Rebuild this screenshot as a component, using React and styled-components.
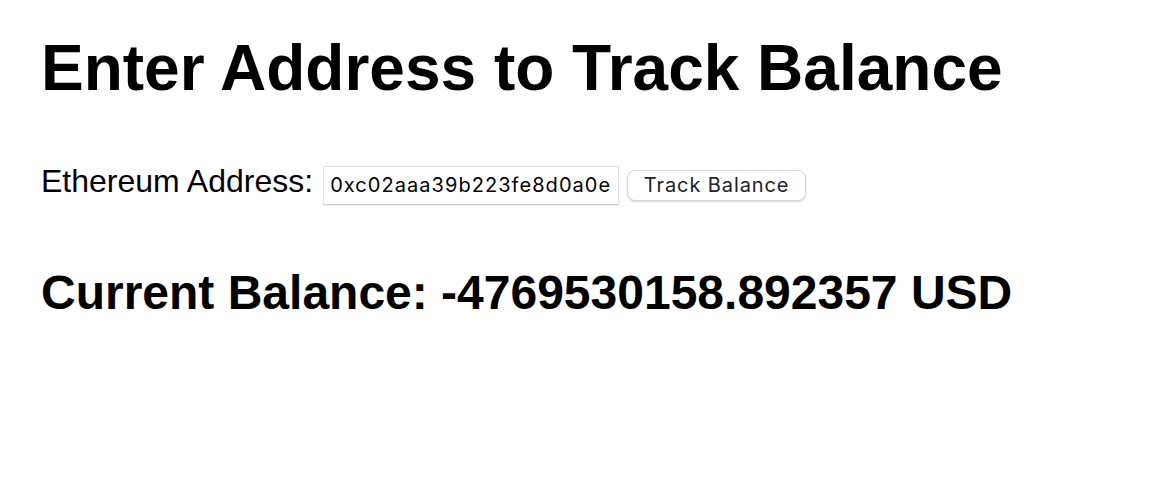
import React, { useState } from "react";
import styled, { createGlobalStyle } from "styled-components";

const GlobalStyle = createGlobalStyle`
  html, body { margin: 0; padding: 0; background: #ffffff; }
  body { font-family: "Liberation Sans", Arial, Helvetica, sans-serif; color: #000; }
`;

const Page = styled.div`
  padding: 31px 38px 0 41px;
  display: flex;
  flex-direction: column;
`;

const Title = styled.h1`
  margin: 0;
  font-size: 64px;
  font-weight: 700;
  line-height: 74px;
`;

const Form = styled.form`
  margin-top: 58px;
  display: flex;
  align-items: baseline;
`;

const Label = styled.label`
  font-size: 32px;
  line-height: 37px;
  margin-right: 10px;
`;

const AddressInput = styled.input`
  box-sizing: border-box;
  width: 296px;
  height: 39px;
  padding: 0 6px;
  margin-right: 8px;
  border: 1px solid #e2e2e2;
  border-bottom-color: #cfcfcf;
  border-radius: 0;
  box-shadow: 0 1px 1px rgba(0, 0, 0, 0.06);
  font-family: Inter, "Noto Sans", sans-serif;
  font-size: 20px;
  letter-spacing: 1.05px;
  color: #000;
  background: #fff;
  outline: none;
`;

const TrackButton = styled.button`
  box-sizing: border-box;
  width: 179px;
  height: 31px;
  padding: 0;
  border: 1px solid #d6d6d6;
  border-radius: 8px;
  background: #ffffff;
  box-shadow: 0 1px 2px rgba(0, 0, 0, 0.14);
  font-family: Inter, "Noto Sans", sans-serif;
  font-size: 20px;
  letter-spacing: 0.9px;
  color: #222;
  cursor: pointer;
`;

const Balance = styled.h2`
  margin: 60px 0 0 0;
  font-size: 48px;
  font-weight: 700;
  line-height: 55px;
`;

export default function App() {
  const [address, setAddress] = useState("0xc02aaa39b223fe8d0a0e5c4f27ead9083c756cc2");
  return (
    <>
      <GlobalStyle />
      <Page>
        <Title>Enter Address to Track Balance</Title>
        <Form onSubmit={(e) => e.preventDefault()}>
          <Label htmlFor="addr">Ethereum Address:</Label>
          <AddressInput
            id="addr"
            value={address}
            onChange={(e) => setAddress(e.target.value)}
          />
          <TrackButton type="submit">Track Balance</TrackButton>
        </Form>
        <Balance>Current Balance: -4769530158.892357 USD</Balance>
      </Page>
    </>
  );
}
